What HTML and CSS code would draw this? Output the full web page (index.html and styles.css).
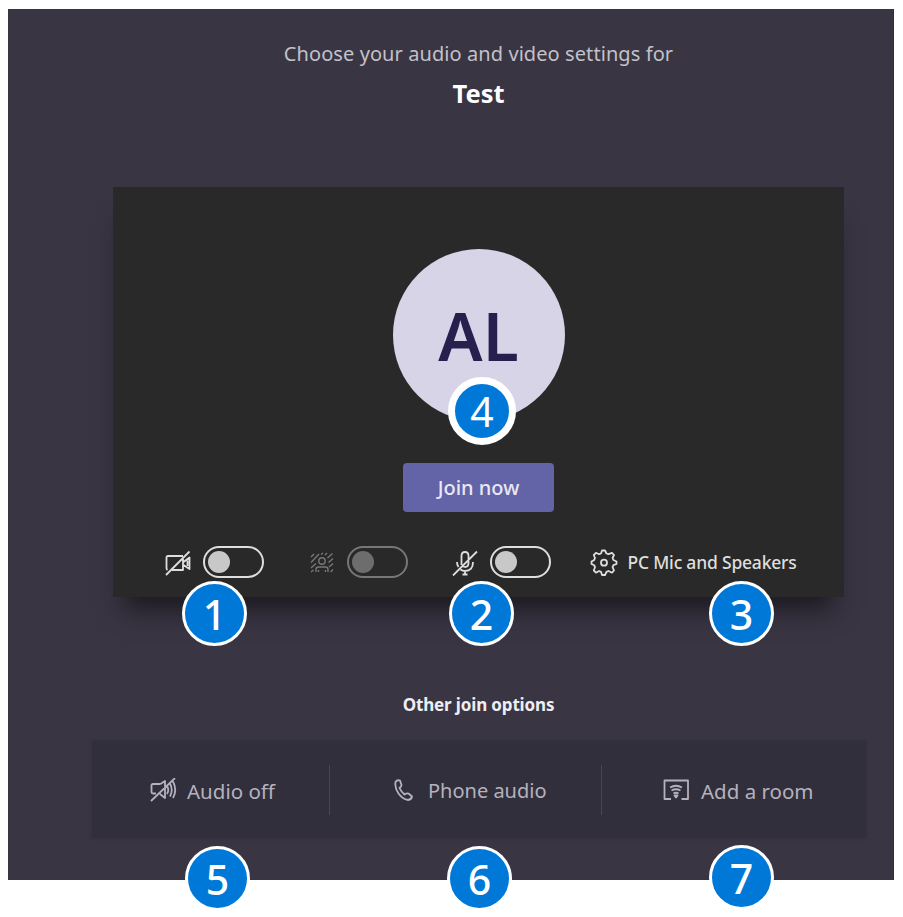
FILE: index.html
```html
<!DOCTYPE html>
<html lang="en">
<head>
<meta charset="utf-8">
<title>Meeting join settings</title>
<link rel="stylesheet" href="styles.css">
</head>
<body>
<main class="screen">
  <header class="intro">
    <p class="lead">Choose your audio and video settings for</p>
    <h1 class="meeting">Test</h1>
  </header>

  <section class="preview">
    <div class="avatar"><span>AL</span></div>
    <button class="join"><span>Join now</span></button>
    <div class="controls">
      <div class="control">
        <svg class="icon" viewBox="0 0 28 28" width="28" height="28">
          <path d="M19 8H4Q2.500 8 2.500 9.500V20Q2.500 21.500 3.500 22M8 22H19V11M19.500 14L25.500 9.500V21L19.500 17M23.500 12.500V18M2 27L25.500 3.500"/>
        </svg>
        <span class="toggle"><i class="knob"></i></span>
      </div>
      <div class="control disabled">
        <svg class="icon fine" viewBox="0 0 28 28" width="28" height="28">
          <path d="M3 9L6 6M3 14.500L11 6M3 20L8 15.500M13 6.500L15 5M17 7L19 5M19.500 10L24.500 5.500M20.500 14.500L25 10.500M21 19L25 15.500M3 24L5.500 22M22.500 24L25 21.500"/>
          <circle cx="14" cy="13" r="3.200"/>
          <path d="M8 24V21.500Q8 19 10.500 19H17.500Q20 19 20 21.500V24M10.500 24V22M17.500 24V22"/>
        </svg>
        <span class="toggle"><i class="knob"></i></span>
      </div>
      <div class="control">
        <svg class="icon" viewBox="0 0 28 28" width="28" height="28">
          <path d="M10.500 17V8Q10.500 4 14 4T17.500 8V15Q17.500 19 14 19L12 18.500M6 14Q6 17 7.500 19M22 14Q22 23 14 23Q11.500 23 9.500 21.500M14 23V26.500M11.500 26.500H16.500M2 27.500L26 3.500"/>
        </svg>
        <span class="toggle"><i class="knob"></i></span>
      </div>
      <div class="device">
        <svg class="icon" viewBox="0 0 28 28" width="28" height="28">
          <path d="M12 2.500H15L16.500 5.500L18.500 6.200L22 4.800L24 7L22.600 10L23.400 12L26.500 13.500V16L23.400 17.200L22.600 19.200L24 22.500L22 24.700L18.500 23L16.500 23.800L15 27H12L11 23.800L9 23L6 24.700L3.800 22.500L5 19.200L4.200 17.200L1.500 16V13.500L4.200 12L5 10L3.800 7L6 4.800L9 6.200L11 5.500Z"/>
          <circle cx="14" cy="14.700" r="3"/>
        </svg>
        <span class="device-name">PC Mic and Speakers</span>
      </div>
    </div>
  </section>

  <h2 class="other">Other join options</h2>
  <nav class="options">
    <a class="option audio">
      <svg class="icon" viewBox="0 0 28 24" width="28" height="24">
        <path d="M11.500 6H4Q2.500 6 2.500 7.500V14Q2.500 15.500 4 15.500H7M11 16L16 20V3L11.500 6M18 8Q20.500 12 18 16M21 5.500Q24.500 12 21 18.500M24 3.500Q28.500 12 24 20M2 23L26 0"/>
      </svg>
      <span>Audio off</span>
    </a>
    <a class="option phone">
      <svg class="icon" viewBox="0 0 20 24" width="20" height="24">
        <path d="M1.500 4Q3 1.500 6 2.500L7.500 7Q7.500 8.500 5.500 10Q7 13.500 10.500 16.500Q12.500 15 14.500 15.500L18 18.500Q17.500 21.500 14 22Q8.500 21 4.500 15.500Q.500 9.500 1.500 4Z"/>
      </svg>
      <span>Phone audio</span>
    </a>
    <a class="option room">
      <svg class="icon" viewBox="0 0 28 24" width="28" height="24">
        <path d="M9 21H2.500V2.500H26V21H19.500M8 9.500Q14 6 20 9.500M9.500 12.500Q14 10 18.500 12.500M11.500 15.500Q14 14 16.500 15.500"/>
        <path class="solid" d="M12.500 17.500H15.500L14 19.500Z"/>
      </svg>
      <span>Add a room</span>
    </a>
  </nav>

  <span class="badge b1">1</span>
  <span class="badge b2">2</span>
  <span class="badge b3">3</span>
  <span class="badge b4">4</span>
  <span class="badge b5">5</span>
  <span class="badge b6">6</span>
  <span class="badge b7">7</span>
</main>
</body>
</html>
```

FILE: styles.css
```css
* { box-sizing: border-box; }
html { background: #fff; }
body {
  min-height: 917px;
  margin: 0;
  padding: 9px 0 0 8px;
  background: #fff;
  font-family: "Noto Sans", "Open Sans", sans-serif;
}
.screen {
  position: relative;
  width: 886px;
  height: 871px;
  background: #393543;
  border-right: 1px solid #302d3a;
}
.intro {
  height: 178px;
  padding: 31px 0 0 56px;
  text-align: center;
  white-space: nowrap;
}
.lead {
  margin: 0;
  font-size: 20px;
  line-height: 28px;
  letter-spacing: .08px;
  color: #c3c1c9;
}
.meeting {
  margin: 7px 0 0;
  font-size: 25.5px;
  line-height: 36px;
  font-weight: 700;
  color: #fff;
}
.preview {
  width: 731px;
  height: 410px;
  margin-left: 105px;
  padding-top: 62px;
  background: #292929;
  box-shadow: 0 24px 24px -12px rgba(20, 18, 24, .8);
}
.avatar {
  display: flex;
  align-items: center;
  justify-content: center;
  width: 172px;
  height: 172px;
  margin: 0 auto;
  border-radius: 50%;
  background: #d8d4e8;
  color: #27204f;
  font-size: 66px;
  font-weight: 600;
}
.join {
  display: block;
  width: 151px;
  height: 49px;
  margin: 42px auto 0;
  padding: 0;
  border: 0;
  border-radius: 4px;
  background: #6264a7;
  color: #e9e8f5;
  font: 500 20px "Noto Sans", sans-serif;
}
.controls {
  display: flex;
  align-items: center;
  height: 32px;
  margin-top: 34px;
  padding-left: 51px;
  color: #dededd;
}
.control {
  display: flex;
  align-items: center;
  gap: 11px;
  width: 143.5px;
}
.disabled { color: #777; }
.icon {
  flex: none;
  fill: none;
  stroke: currentColor;
  stroke-width: 1.8;
  stroke-linejoin: round;
}
.fine { stroke-width: 1.4; }
.solid { fill: currentColor; }
.toggle {
  width: 61px;
  height: 32px;
  padding: 3px;
  border: 2.500px solid currentColor;
  border-radius: 16px;
}
.knob {
  display: block;
  width: 22px;
  height: 22px;
  border-radius: 50%;
  background: #c8c8c8;
}
.disabled .knob { background: #6d6d6d; }
.device {
  display: flex;
  align-items: center;
  gap: 10px;
  margin-left: -5px;
  white-space: nowrap;
}
.device-name { font-size: 17.5px; letter-spacing: .05px; font-weight: 500; letter-spacing: -.2px; }
.other {
  margin: 94px 0 0 56px;
  text-align: center;
  color: #eeedf2;
  font-size: 17px;
  line-height: 28px;
  font-weight: 700;
  letter-spacing: -.15px;
}
.options {
  display: grid;
  grid-template-columns: 237px 272px 265px;
  align-items: center;
  width: 774px;
  height: 97px;
  margin: 22px 0 0 84px;
  background: #322f3c;
  box-shadow: 0 0 3px #322f3c;
}
.option {
  display: flex;
  align-items: center;
  height: 50px;
  color: #b5b2be;
  font-size: 20.5px;
  white-space: nowrap;
}
.option > span { margin-top: 2px; }
.option + .option { border-left: 1px solid #494653; }
.audio { padding-left: 57px; gap: 10px; }
.phone { padding-left: 64px; gap: 14px; font-size: 20px; }
.room { padding-left: 60px; gap: 11px; }
.badge {
  position: absolute;
  width: 65px;
  height: 65px;
  border: 3.500px solid #fff;
  border-radius: 50%;
  background: #0078d7;
  color: #fff;
  font-size: 41px;
  font-weight: 500;
  line-height: 60px;
  text-align: center;
}
.b1 { left: 174px; top: 572px; }
.b2 { left: 441px; top: 572px; }
.b3 { left: 701px; top: 572px; }
.b4 { left: 440px; top: 368px; width: 68px; height: 68px; border-width: 7px; line-height: 54px; font-weight: 400; }
.b5 { left: 177px; top: 837px; }
.b6 { left: 439px; top: 837px; }
.b7 { left: 701px; top: 836px; }
```
